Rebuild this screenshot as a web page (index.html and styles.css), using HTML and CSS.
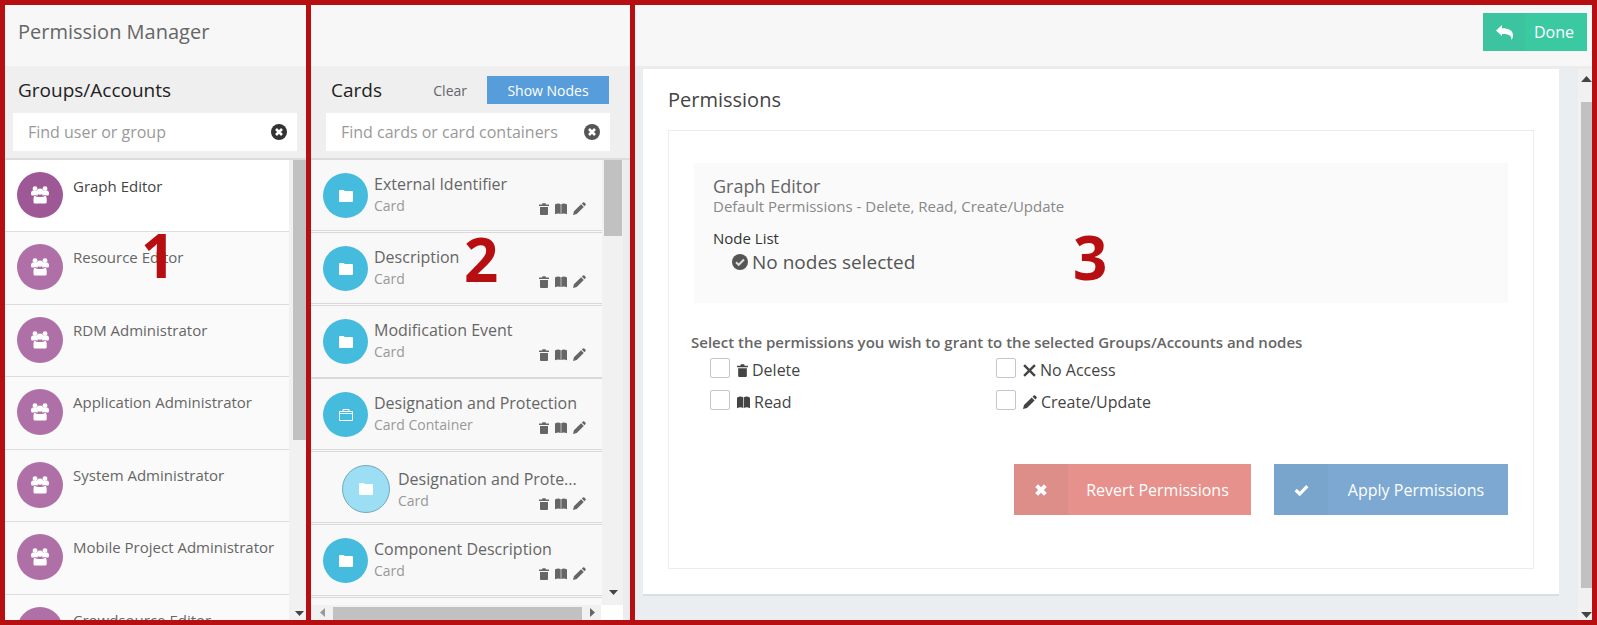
FILE: index.html
```html
<!DOCTYPE html>
<html lang="en">
<head>
<meta charset="utf-8">
<title>Permission Manager</title>
<link rel="stylesheet" href="styles.css">
</head>
<body>
<svg class="defs" aria-hidden="true">
  <symbol id="group" viewBox="0 0 18 18"><circle cx="4" cy="2.600" r="2.400"/><circle cx="14" cy="2.600" r="2.400"/><path d="M1.500 4.500H6l1 5H1.500Q0 9.500 0 8V6zM16.500 4.500H12l-1 5h5.500Q18 9.500 18 8V6z"/><circle cx="9" cy="5.600" r="3.200"/><path d="M3.500 9.800Q6 11 9 11t5.500-1.200q1.200 1 1.200 3v3.200q0 1.500-1.500 1.500H4q-1.500 0-1.500-1.500v-3.200q0-2 1-3z"/><path d="M3.500 9.300q2.500 1.200 5.500 1.200t5.500-1.200" fill="none" stroke="#ae70a7" stroke-width=".7"/></symbol>
  <symbol id="folder" viewBox="0 0 14 12"><path d="M0 1q0-1 1-1h3.500q1 0 1 1h7.500q1 0 1 1v9q0 1-1 1H1q-1 0-1-1z"/></symbol>
  <symbol id="container" viewBox="0 0 14 12"><path d="M.5 2.500h13v9H.5zM.5 4.500h13M4 2V.5h6V2" fill="none" stroke="currentColor"/></symbol>
  <symbol id="trash" viewBox="0 0 10 12"><path d="M0 1.500h3L3.500.3h3L7 1.500h3V3H0zM1 4h8v7q0 1-1 1H2q-1 0-1-1z"/></symbol>
  <symbol id="book" viewBox="0 0 12 12"><path d="M0 1.500Q3-.3 5.700 1.200v9.800Q3 9.800 0 11.300zM6.300 1.200Q9-.3 12 1.500v9.800q-3-1.500-5.700-.3z"/></symbol>
  <symbol id="pencil" viewBox="0 0 14 14"><path d="M0 14l1-4 7.700-7.500 2.900 2.900L4 13zM9.500 1.700l1.200-1.200q.7-.7 1.500 0l1.300 1.300q.7.700 0 1.400l-1.200 1.300z"/></symbol>
  <symbol id="clear" viewBox="0 0 16 16"><circle cx="8" cy="8" r="8"/><path d="M5 5l6 6M11 5l-6 6" stroke="#fff" stroke-width="2.600"/></symbol>
  <symbol id="ok" viewBox="0 0 16 16"><circle cx="8" cy="8" r="8"/><path d="M4 8.300l2.700 2.500L12 5.500" fill="none" stroke="#ddd" stroke-width="2"/></symbol>
  <symbol id="cross" viewBox="0 0 12 12"><path d="M1 1l10 10M11 1L1 11" stroke="currentColor" stroke-width="2.200"/></symbol>
  <symbol id="times" viewBox="0 0 12 12"><path d="M1.600 1.600l8.800 8.800M10.400 1.600l-8.800 8.800" stroke="currentColor" stroke-width="4"/></symbol>
  <symbol id="check" viewBox="0 0 14 12"><path d="M1.200 6l4 4L12.800 2.200" fill="none" stroke="currentColor" stroke-width="3.200"/></symbol>
  <symbol id="reply" viewBox="0 0 17 15"><path d="M0 5.500L6 0v3.300c7 0 11 2.200 11 7.200 0 1.700-.5 3-1.500 4.500.2-4.500-2.500-6-9.500-6V11z"/></symbol>
  <symbol id="down" viewBox="0 0 9 5"><path d="M0 0h9L4.500 5z"/></symbol>
  <symbol id="up" viewBox="0 0 9 5"><path d="M0 5h9L4.500 0z"/></symbol>
  <symbol id="left" viewBox="0 0 5 9"><path d="M5 0v9L0 4.500z"/></symbol>
  <symbol id="right" viewBox="0 0 5 9"><path d="M0 0v9l5-4.500z"/></symbol>
</svg>
<div class="app">
  <section class="pane groups">
    <header class="topbar"><h1>Permission Manager</h1></header>
    <div class="tools">
      <div class="tools-row"><h2>Groups/Accounts</h2></div>
      <div class="search">
        <input type="text" aria-label="Find user or group" placeholder="Find user or group">
        <button class="reset" aria-label="Clear search"><svg width="16" height="16"><use href="#clear"/></svg></button>
      </div>
    </div>
    <div class="scroller">
      <ul class="group-list">
        <li class="selected"><a href="#"><span class="disc"><svg width="18" height="18"><use href="#group"/></svg></span>Graph Editor</a></li>
        <li><a href="#"><span class="disc"><svg width="18" height="18"><use href="#group"/></svg></span>Resource Editor</a></li>
        <li><a href="#"><span class="disc"><svg width="18" height="18"><use href="#group"/></svg></span>RDM Administrator</a></li>
        <li><a href="#"><span class="disc"><svg width="18" height="18"><use href="#group"/></svg></span>Application Administrator</a></li>
        <li><a href="#"><span class="disc"><svg width="18" height="18"><use href="#group"/></svg></span>System Administrator</a></li>
        <li><a href="#"><span class="disc"><svg width="18" height="18"><use href="#group"/></svg></span>Mobile Project Administrator</a></li>
        <li><a href="#"><span class="disc"><svg width="18" height="18"><use href="#group"/></svg></span>Crowdsource Editor</a></li>
      </ul>
      <div class="track"><div class="thumb"></div><svg class="arrow" width="9" height="5"><use href="#down"/></svg></div>
    </div>
    <span class="marker">1</span>
  </section>

  <section class="pane cards">
    <header class="topbar"></header>
    <div class="tools">
      <div class="tools-row"><h2>Cards</h2><button class="plain">Clear</button><button class="show">Show Nodes</button></div>
      <div class="search">
        <input type="text" aria-label="Find cards or card containers" placeholder="Find cards or card containers">
        <button class="reset" aria-label="Clear search"><svg width="16" height="16"><use href="#clear"/></svg></button>
      </div>
    </div>
    <div class="scroller">
      <ul class="card-list">
        <li><span class="disc"><svg width="14" height="12"><use href="#folder"/></svg></span><a href="#"><b>External Identifier</b><small>Card</small></a><span class="perms"><svg width="10" height="12"><use href="#trash"/></svg><svg width="12" height="12"><use href="#book"/></svg><svg width="13" height="13"><use href="#pencil"/></svg></span></li>
        <li><span class="disc"><svg width="14" height="12"><use href="#folder"/></svg></span><a href="#"><b>Description</b><small>Card</small></a><span class="perms"><svg width="10" height="12"><use href="#trash"/></svg><svg width="12" height="12"><use href="#book"/></svg><svg width="13" height="13"><use href="#pencil"/></svg></span></li>
        <li><span class="disc"><svg width="14" height="12"><use href="#folder"/></svg></span><a href="#"><b>Modification Event</b><small>Card</small></a><span class="perms"><svg width="10" height="12"><use href="#trash"/></svg><svg width="12" height="12"><use href="#book"/></svg><svg width="13" height="13"><use href="#pencil"/></svg></span></li>
        <li><span class="disc"><svg width="14" height="12"><use href="#container"/></svg></span><a href="#"><b>Designation and Protection</b><small>Card Container</small></a><span class="perms"><svg width="10" height="12"><use href="#trash"/></svg><svg width="12" height="12"><use href="#book"/></svg><svg width="13" height="13"><use href="#pencil"/></svg></span></li>
        <li class="child"><span class="disc"><svg width="14" height="12"><use href="#folder"/></svg></span><a href="#"><b>Designation and Prote...</b><small>Card</small></a><span class="perms"><svg width="10" height="12"><use href="#trash"/></svg><svg width="12" height="12"><use href="#book"/></svg><svg width="13" height="13"><use href="#pencil"/></svg></span></li>
        <li><span class="disc"><svg width="14" height="12"><use href="#folder"/></svg></span><a href="#"><b>Component Description</b><small>Card</small></a><span class="perms"><svg width="10" height="12"><use href="#trash"/></svg><svg width="12" height="12"><use href="#book"/></svg><svg width="13" height="13"><use href="#pencil"/></svg></span></li>
        <li></li>
      </ul>
      <div class="track"><div class="thumb"></div><svg class="arrow" width="9" height="5"><use href="#down"/></svg></div>
    </div>
    <div class="hscroll"><div class="htrack"><svg class="muted" width="5" height="9"><use href="#left"/></svg><div class="hthumb"></div><svg width="5" height="9"><use href="#right"/></svg></div></div>
    <span class="marker">2</span>
  </section>

  <section class="pane main">
    <header class="topbar"><button class="done"><span class="btn-icon"><svg width="17" height="15"><use href="#reply"/></svg></span><span class="btn-text">Done</span></button></header>
    <div class="scroller">
      <div class="content">
        <div class="sheet">
          <h2>Permissions</h2>
          <div class="panel">
            <div class="summary">
              <h3>Graph Editor</h3>
              <p class="defaults">Default Permissions - Delete, Read, Create/Update</p>
              <p class="nodes">Node List</p>
              <p class="none"><svg width="16" height="16"><use href="#ok"/></svg>No nodes selected</p>
            </div>
            <fieldset class="options">
              <legend>Select the permissions you wish to grant to the selected Groups/Accounts and nodes</legend>
              <div class="choices">
                <label><input type="checkbox"><svg width="11" height="13"><use href="#trash"/></svg>Delete</label>
                <label><input type="checkbox"><svg width="13" height="13"><use href="#cross"/></svg>No Access</label>
                <label><input type="checkbox"><svg width="13" height="13"><use href="#book"/></svg>Read</label>
                <label><input type="checkbox"><svg width="14" height="14"><use href="#pencil"/></svg>Create/Update</label>
              </div>
            </fieldset>
            <div class="actions">
              <button class="revert"><span class="btn-icon"><svg width="12" height="12"><use href="#times"/></svg></span><span class="btn-text">Revert Permissions</span></button>
              <button class="apply"><span class="btn-icon"><svg width="15" height="12"><use href="#check"/></svg></span><span class="btn-text">Apply Permissions</span></button>
            </div>
          </div>
        </div>
      </div>
      <div class="track"><svg class="arrow" width="13" height="6"><use href="#up"/></svg><div class="thumb"></div><svg class="arrow" width="13" height="6"><use href="#down"/></svg></div>
    </div>
    <span class="marker">3</span>
  </section>
</div>
</body>
</html>
```
FILE: styles.css
```css
* { box-sizing: border-box; }
body { margin: 0; font-family: "Open Sans", sans-serif; font-size: 15px; color: #666; }
h1, h2, h3, p, ul { margin: 0; padding: 0; font-weight: 400; }
ul { list-style: none; }
a { color: inherit; text-decoration: none; }
button { border: 0; padding: 0; background: none; font: inherit; color: inherit; cursor: pointer; }
svg { display: block; flex: none; fill: currentColor; }
.defs { position: absolute; width: 0; height: 0; }

.app { display: grid; grid-template-columns: 301px 319px minmax(0, 1fr); gap: 5px; padding: 5px; height: 100vh; background: #b70e11; }
.pane { position: relative; display: flex; flex-direction: column; min-height: 0; overflow: hidden; background: #f1f1f1; }
.topbar { flex: none; display: flex; height: 61px; padding: 0 13px; background: #f7f7f7; }
h1 { font-size: 20px; line-height: 54px; }
.marker { position: absolute; font-size: 60px; font-weight: 700; line-height: 60px; color: #b70e11; }
.groups .marker { left: 136px; top: 220px; }
.cards .marker { left: 153px; top: 224px; }
.main .marker { left: 438px; top: 222px; }

.tools { flex: none; height: 94px; padding: 5px 9px 0 8px; background: #efefef; border-bottom: 2px solid #dcdcdc; }
.tools-row { display: flex; align-items: center; height: 38px; padding: 0 1px 0 5px; margin-bottom: 4px; color: #222; }
.tools-row h2 { flex: 1; font-size: 19px; }
.search { display: flex; align-items: center; height: 38px; padding: 0 10px 0 15px; background: #fff; color: #333; }
.search input { flex: 1; min-width: 0; padding: 0; border: 0; outline: 0; background: none; font: 16px "Open Sans", sans-serif; }
.search input::placeholder { color: #999; }
.cards .tools { padding-left: 15px; padding-right: 20px; }
.cards .reset { color: #555; }
.plain { margin-right: 20px; font-size: 14px; color: #666; }
.show { width: 122px; height: 28px; background: #579ddb; color: #fff; font-size: 14px; font-weight: 500; }

.scroller { flex: 1; display: flex; min-height: 0; overflow: hidden; }
.track { flex: none; display: flex; flex-direction: column; align-items: center; background: #f1f1f1; }
.thumb { align-self: stretch; background: #c1c1c1; }
.arrow { color: #444; }

.group-list { flex: 1; }
.group-list li { height: 72px; border-bottom: 1px solid #ddd; background: #fafafa; }
.group-list li:nth-child(even) { height: 73px; }
.group-list a { display: flex; gap: 10px; padding: 12px; line-height: 26px; }
.group-list .disc { width: 46px; height: 46px; background: #ae70a7; }
.group-list .selected { background: #fff; color: #444; }
.group-list .selected a { line-height: 28px; }
.group-list .selected .disc { background: #9f5896; }
.disc { flex: none; display: flex; align-items: center; justify-content: center; border-radius: 50%; color: #fff; }
.groups .track { width: 17px; padding: 0 0 4px 4px; }
.groups .thumb { height: 280px; }
.groups .track .arrow { margin-top: auto; }

.card-list { flex: 1; background: #f8f8f8; }
.card-list li { display: flex; height: 73px; padding: 13px 16px 0 12px; gap: 6px; border-bottom: 3px double #d9d9d9; }
.card-list li:nth-child(3) { border-bottom: 2px solid #d9d9d9; }
.card-list .disc { width: 45px; height: 45px; background: #45bbde; }
.card-list a { flex: 1; min-width: 0; white-space: nowrap; }
.card-list b { display: block; font-size: 16px; font-weight: 400; line-height: 22px; }
.card-list small { display: block; font-size: 14px; line-height: 22px; color: #999; }
.card-list .perms { align-self: flex-start; display: flex; align-items: center; gap: 6px; margin-top: 29px; margin-left: -60px; }
.card-list .child { padding-left: 31px; gap: 8px; }
.child .disc { width: 48px; height: 48px; background: #9cdef3; border: 1px solid #74a9bb; }
.child a { padding-top: 3px; }
.card-list .child .perms { margin-top: 32px; }
.cards .scroller, .hscroll { border-right: 7px solid #ecebed; }
.cards .track { width: 21px; padding: 0 1px 10px 2px; }
.cards .thumb { height: 76px; }
.cards .track .arrow { margin-top: auto; }
.hscroll { flex: none; height: 15px; padding-right: 22px; background: #fff; }
.htrack { display: flex; align-items: center; gap: 8px; height: 15px; padding: 0 6px 0 9px; background: #f1f1f1; }
.hthumb { flex: 1; align-self: stretch; margin-top: 2px; background: #c1c1c1; }
.muted { color: #999; }

.main .topbar { justify-content: flex-end; padding: 8px 5px 0; }
.done { display: flex; width: 104px; height: 38px; background: #3bc9a2; color: #fff; font-size: 16px; font-weight: 500; }
.btn-icon { display: flex; align-items: center; justify-content: center; align-self: stretch; background: rgba(90, 110, 120, .06); }
.btn-text { flex: 1; align-self: center; padding-right: 4px; }
.done .btn-icon { width: 42px; }
.main .scroller { border-top: 3px solid #ececec; }
.content { flex: 1; min-width: 0; padding: 0 19px 24px 8px; background: #eaeef0; }
.sheet { display: flex; flex-direction: column; height: 100%; padding: 0 25px 25px 25px; background: #fff; border-bottom: 2px solid #d8dee2; }
.sheet h2 { flex: none; font-size: 20px; line-height: 61px; color: #444; }
.panel { flex: 1; padding: 32px 25px 0; border: 1px solid #ededed; }
.summary { height: 140px; padding: 11px 19px; background: #fafafa; }
.summary h3 { font-size: 18px; line-height: 24px; }
.defaults { font-size: 15px; line-height: 17px; color: #888; }
.nodes { margin-top: 11px; font-size: 15px; line-height: 24px; color: #333; }
.none { display: flex; align-items: center; gap: 4px; padding-left: 19px; font-size: 19px; line-height: 24px; color: #555; }
.options { margin: 27px 0 0; padding: 0; border: 0; }
legend { margin-left: -3px; padding: 0; font-size: 15px; font-weight: 600; line-height: 24px; }
.choices { display: grid; grid-template-columns: 286px 286px; row-gap: 8px; padding: 4px 0 0 16px; }
.choices label { display: flex; align-items: center; height: 24px; gap: 4px; font-size: 16px; color: #444; }
.choices input { appearance: none; flex: none; width: 20px; height: 20px; margin: 0 3px 4px 0; border: 1px solid #c0c7d0; border-radius: 2px; background: #fff; }
.actions { display: flex; justify-content: flex-end; gap: 23px; padding-top: 50px; }
.actions button { display: flex; height: 51px; color: #fff; font-size: 16px; font-weight: 500; }
.actions .btn-icon { width: 54px; }
.revert { width: 237px; background: #e6918b; }
.apply { width: 234px; background: #7ca8d2; }
.main .track { width: 14px; padding: 7px 0 2px 3px; }
.main .thumb { flex: 1; margin: 20px 0 24px; }
```
